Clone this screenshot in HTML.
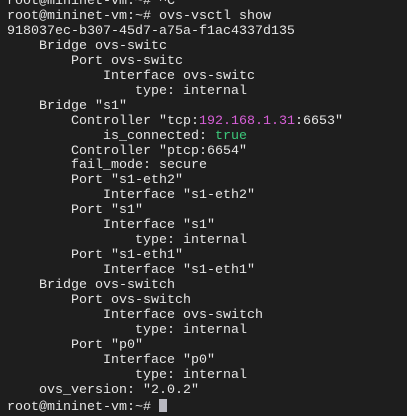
<!DOCTYPE html>
<html><head><meta charset="utf-8"><style>
html,body{margin:0;padding:0;background:#1e1e1e;width:407px;height:403px;overflow:hidden}
pre{margin:0;position:absolute;left:7px;top:-5px;font-family:"Liberation Mono","DejaVu Sans Mono",monospace;font-size:13.33px;line-height:14.96px;color:#e6e6e6;white-space:pre}
.m{color:#d85fd8}.g{color:#3cc87a}
.c{display:inline-block;width:8px;height:13px;background:#b8b8c0;vertical-align:-2px}
</style></head><body><pre>root@mininet-vm:~# ^C
root@mininet-vm:~# ovs-vsctl show
918037ec-b307-45d7-a75a-f1ac4337d135
    Bridge ovs-switc
        Port ovs-switc
            Interface ovs-switc
                type: internal
    Bridge "s1"
        Controller "tcp:<span class="m">192.168.1.31</span>:6653"
            is_connected: <span class="g">true</span>
        Controller "ptcp:6654"
        fail_mode: secure
        Port "s1-eth2"
            Interface "s1-eth2"
        Port "s1"
            Interface "s1"
                type: internal
        Port "s1-eth1"
            Interface "s1-eth1"
    Bridge ovs-switch
        Port ovs-switch
            Interface ovs-switch
                type: internal
        Port "p0"
            Interface "p0"
                type: internal
    ovs_version: "2.0.2"
root@mininet-vm:~# <span class="c"></span></pre></body></html>
